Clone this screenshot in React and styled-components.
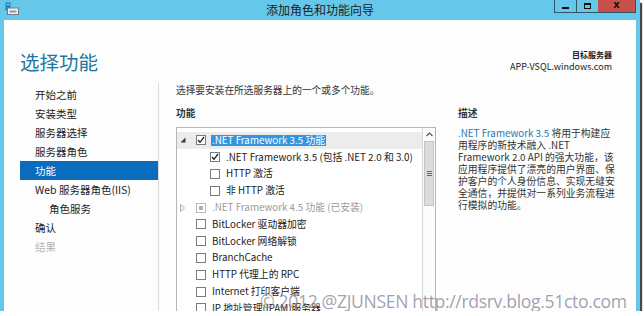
import styled, { createGlobalStyle } from 'styled-components';

const GlobalStyle = createGlobalStyle`
  body {
    margin: 0;
    background: #fff;
    font-family: "Noto Sans CJK SC", "Noto Sans", sans-serif;
  }
`;

const navItems = [
  { label: '开始之前' },
  { label: '安装类型' },
  { label: '服务器选择' },
  { label: '服务器角色' },
  { label: '功能', selected: true },
  { label: 'Web 服务器角色(IIS)' },
  { label: '角色服务', indent: true },
  { label: '确认' },
  { label: '结果', disabled: true },
];

const features = [
  { label: '.NET Framework 3.5 功能', level: 0, expander: 'open', state: 'checked', selected: true },
  { label: '.NET Framework 3.5 (包括 .NET 2.0 和 3.0)', level: 1, state: 'checked' },
  { label: 'HTTP 激活', level: 1, state: 'empty' },
  { label: '非 HTTP 激活', level: 1, state: 'empty' },
  { label: '.NET Framework 4.5 功能 (已安装)', level: 0, expander: 'closed', state: 'installed', disabled: true },
  { label: 'BitLocker 驱动器加密', level: 0, state: 'empty' },
  { label: 'BitLocker 网络解锁', level: 0, state: 'empty' },
  { label: 'BranchCache', level: 0, state: 'empty' },
  { label: 'HTTP 代理上的 RPC', level: 0, state: 'empty' },
  { label: 'Internet 打印客户端', level: 0, state: 'empty' },
  { label: 'IP 地址管理(IPAM)服务器', level: 0, state: 'empty' },
];

function App() {
  return (
    <>
      <GlobalStyle />
      <Window>
        <TitleBar>
          <TitleIcon width="14" height="13" viewBox="0 0 14 13">
            <rect x="0.5" y="0.5" width="5" height="8" fill="#2a7fd0" />
            <rect x="1.5" y="2" width="3" height="1" fill="#9fd2f5" />
            <rect x="2.5" y="6" width="11" height="6.5" fill="#f2f2f2" stroke="#6a7c88" />
            <rect x="4.5" y="8.5" width="7" height="2" fill="#8a9aa5" />
          </TitleIcon>
          <TitleText>添加角色和功能向导</TitleText>
          <WindowButtons>
            <WinButton>
              <MinGlyph />
            </WinButton>
            <WinButton>
              <MaxGlyph />
            </WinButton>
            <WinButton $close>
              <CloseGlyph>x</CloseGlyph>
            </WinButton>
          </WindowButtons>
        </TitleBar>

        <Body>
          <Header>
            <Heading>选择功能</Heading>
            <ServerInfo>
              <strong>目标服务器</strong>
              <span>APP-VSQL.windows.com</span>
            </ServerInfo>
          </Header>

          <Main>
            <Nav>
              {navItems.map((item) => (
                <NavItem
                  key={item.label}
                  $selected={item.selected}
                  $indent={item.indent}
                  $disabled={item.disabled}
                >
                  {item.label}
                </NavItem>
              ))}
            </Nav>

            <Content>
              <Intro>选择要安装在所选服务器上的一个或多个功能。</Intro>
              <Columns>
                <FeatureColumn>
                  <SectionLabel>功能</SectionLabel>
                  <ListBox>
                    <ListRows>
                      {features.map((f) => (
                        <Row key={f.label} $level={f.level} $selected={f.selected}>
                          <Expander>
                            {f.expander === 'open' && (
                              <svg width="6" height="6" viewBox="0 0 6 6">
                                <path d="M5.5 0.5 L5.5 5.5 L0.5 5.5 Z" fill="#3a3a3a" />
                              </svg>
                            )}
                            {f.expander === 'closed' && (
                              <svg width="5" height="8" viewBox="0 0 5 8">
                                <path d="M0.5 0.5 L4.5 4 L0.5 7.5 Z" fill="none" stroke="#a8a8a8" />
                              </svg>
                            )}
                          </Expander>
                          <Checkbox $state={f.state}>
                            {f.state === 'checked' && (
                              <svg width="8" height="8" viewBox="0 0 8 8">
                                <path d="M1 4 L3 6.3 L7 1" fill="none" stroke="#222" strokeWidth="1.3" />
                              </svg>
                            )}
                          </Checkbox>
                          <RowText $selected={f.selected} $disabled={f.disabled}>
                            {f.label}
                          </RowText>
                        </Row>
                      ))}
                    </ListRows>
                    <Scrollbar>
                      <ScrollUp>
                        <svg width="7" height="5" viewBox="0 0 7 5">
                          <path d="M0.5 4 L3.5 1 L6.5 4" fill="none" stroke="#555" strokeWidth="1.2" />
                        </svg>
                      </ScrollUp>
                      <ScrollThumb>
                        <Grip />
                      </ScrollThumb>
                    </Scrollbar>
                  </ListBox>
                </FeatureColumn>

                <DescColumn>
                  <SectionLabel>描述</SectionLabel>
                  <DescText>
                    <Link>.NET Framework 3.5</Link> 将用于构建应
                    <br />
                    用程序的新技术融入 .NET
                    <br />
                    Framework 2.0 API 的强大功能，该
                    <br />
                    应用程序提供了漂亮的用户界面、保
                    <br />
                    护客户的个人身份信息、实现无缝安
                    <br />
                    全通信，并提供对一系列业务流程进
                    <br />
                    行模拟的功能。
                  </DescText>
                </DescColumn>
              </Columns>
            </Content>
          </Main>
        </Body>

        <Watermark>© 2012 @ZJUNSEN http://rdsrv.blog.51cto.com</Watermark>
      </Window>
    </>
  );
}

const Window = styled.div`
  position: relative;
  width: 640px;
  height: 311px;
  background: #65c8ea;
  display: flex;
  flex-direction: column;
  box-shadow: 2px 3px 1px rgba(40, 40, 40, 0.85);
`;

const TitleBar = styled.div`
  position: relative;
  height: 20px;
  flex-shrink: 0;
  display: flex;
  align-items: center;
  justify-content: center;
`;

const TitleIcon = styled.svg`
  position: absolute;
  left: 5px;
  top: 2px;
`;

const TitleText = styled.div`
  font-size: 12px;
  line-height: 14px;
  color: #1c1c1c;
  margin-top: -1px;
`;

const WindowButtons = styled.div`
  position: absolute;
  top: 0;
  right: 4px;
  display: flex;
  height: 12px;
  border: 1px solid #2f5566;
  border-top: none;
`;

const WinButton = styled.div`
  width: ${(p) => (p.$close ? '37px' : '21px')};
  height: 12px;
  background: ${(p) => (p.$close ? '#c7504a' : '#65c8ea')};
  border-left: ${(p) => (p.$close ? 'none' : '1px solid #2f5566')};
  display: flex;
  align-items: center;
  justify-content: center;
  &:first-child {
    border-left: none;
  }
`;

const MinGlyph = styled.div`
  width: 7px;
  height: 2px;
  background: #111;
  margin-top: 4px;
`;

const MaxGlyph = styled.div`
  width: 5px;
  height: 3px;
  border: 1px solid #111;
  border-top-width: 2px;
`;

const CloseGlyph = styled.span`
  font-family: "DejaVu Sans", sans-serif;
  font-weight: bold;
  font-size: 10px;
  line-height: 10px;
  color: #111;
  margin-top: -2px;
`;

const Body = styled.div`
  flex: 1;
  margin: 0 4px;
  background: #fdfdfd;
  display: flex;
  flex-direction: column;
  overflow: hidden;
  color: #222;
`;

const Header = styled.div`
  height: 63px;
  flex-shrink: 0;
  box-sizing: border-box;
  padding: 29px 24px 0 16px;
  display: flex;
  justify-content: space-between;
  align-items: flex-start;
`;

const Heading = styled.h1`
  margin: 1px 0 0;
  font-size: 19.5px;
  line-height: 24px;
  font-weight: 400;
  color: #22759f;
`;

const ServerInfo = styled.div`
  display: flex;
  flex-direction: column;
  align-items: flex-end;
  font-size: 8px;
  line-height: 12px;
  color: #222;
  strong {
    font-weight: 700;
  }
  span {
    font-size: 9px;
  }
`;

const Main = styled.div`
  flex: 1;
  display: flex;
  min-height: 0;
`;

const Nav = styled.div`
  width: 155px;
  flex-shrink: 0;
  box-sizing: border-box;
  padding: 2px 0 0 16px;
  border-right: 1px solid #dcdcdc;
`;

const NavItem = styled.div`
  height: 19px;
  display: flex;
  align-items: center;
  padding-left: ${(p) => (p.$indent ? '29px' : '15px')};
  font-size: 10.5px;
  background: ${(p) => (p.$selected ? '#0a6cbd' : 'transparent')};
  color: ${(p) => (p.$selected ? '#fff' : p.$disabled ? '#b4b4b4' : '#222')};
`;

const Content = styled.div`
  flex: 1;
  padding-left: 17px;
  display: flex;
  flex-direction: column;
`;

const Intro = styled.div`
  font-size: 9.7px;
  line-height: 14px;
  color: #333;
`;

const Columns = styled.div`
  display: flex;
  gap: 22px;
  margin-top: 9px;
`;

const FeatureColumn = styled.div`
  width: 260px;
  display: flex;
  flex-direction: column;
`;

const SectionLabel = styled.div`
  font-size: 9.7px;
  line-height: 14px;
  font-weight: 700;
  color: #333;
  margin-bottom: 7px;
`;

const ListBox = styled.div`
  height: 190px;
  border: 1px solid #b4b6bb;
  display: flex;
  background: #fff;
`;

const ListRows = styled.div`
  flex: 1;
  padding-top: 4px;
`;

const Row = styled.div`
  height: 16.8px;
  display: flex;
  align-items: center;
  padding-left: ${(p) => 1 + p.$level * 14}px;
  background: ${(p) => (p.$selected ? '#ececec' : 'transparent')};
`;

const Expander = styled.span`
  width: 18px;
  display: flex;
  justify-content: flex-start;
  padding-left: 2px;
  box-sizing: border-box;
`;

const Checkbox = styled.span`
  width: 10px;
  height: 10px;
  box-sizing: border-box;
  border: 1px solid ${(p) => (p.$state === 'installed' ? '#b8b8b8' : '#7c7c7c')};
  background: #fff;
  display: flex;
  align-items: center;
  justify-content: center;
  margin-right: 6px;
  &::after {
    content: '';
    display: ${(p) => (p.$state === 'installed' ? 'block' : 'none')};
    width: 4px;
    height: 4px;
    background: #b0b0b0;
  }
`;

const RowText = styled.span`
  font-size: 9.8px;
  line-height: 11px;
  padding: 0 1px;
  margin-left: -1px;
  background: ${(p) => (p.$selected ? '#3394e0' : 'transparent')};
  color: ${(p) => (p.$selected ? '#fff' : p.$disabled ? '#9a9a9a' : '#222')};
  white-space: nowrap;
`;

const Scrollbar = styled.div`
  width: 12px;
  flex-shrink: 0;
  border-left: 1px solid #d8d8d8;
  background: #fbfbfb;
  display: flex;
  flex-direction: column;
  align-items: center;
`;

const ScrollUp = styled.div`
  height: 13px;
  width: 100%;
  display: flex;
  align-items: center;
  justify-content: center;
`;

const ScrollThumb = styled.div`
  width: 10px;
  height: 65px;
  box-sizing: border-box;
  background: #dcdcdc;
  border: 1px solid #c4c4c4;
  display: flex;
  align-items: center;
  justify-content: center;
`;

const Grip = styled.div`
  width: 5px;
  height: 5px;
  background: repeating-linear-gradient(#666 0 1px, transparent 1px 2px);
`;

const DescColumn = styled.div`
  flex: 1;
  display: flex;
  flex-direction: column;
`;

const DescText = styled.div`
  font-size: 9.8px;
  line-height: 12px;
  color: #333;
  white-space: nowrap;
`;

const Link = styled.span`
  color: #1f7ab4;
`;

const Watermark = styled.div`
  position: absolute;
  left: 260px;
  top: 290px;
  font-family: "Open Sans", sans-serif;
  font-size: 17.6px;
  line-height: 22px;
  letter-spacing: -0.35px;
  color: rgba(120, 120, 140, 0.7);
  white-space: nowrap;
  pointer-events: none;
`;

export default App;
